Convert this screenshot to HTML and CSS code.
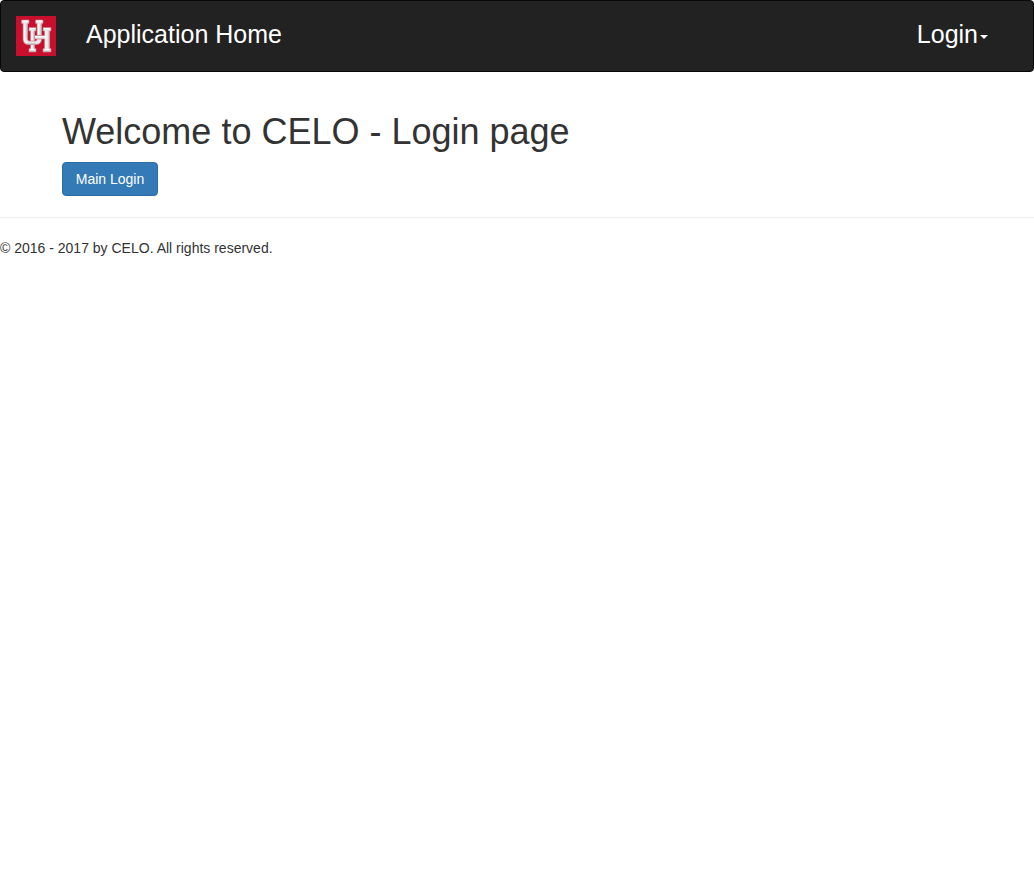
FILE: index.html
```html
<!DOCTYPE html>
<html lang="en">
<head>
  <meta charset="utf-8">
  <meta name="viewport" content="width=device-width, initial-scale=1">
  <title>CELO - Login</title>
  <link rel="stylesheet" href="styles.css">
</head>
<body>
  <nav class="navbar">
    <a class="brand" href="#" aria-label="Home">
      <svg class="logo" viewBox="0 0 40 40" aria-hidden="true">
        <rect width="40" height="40" fill="#c8102e"/>
        <g fill="#e9e9e9" stroke="#cf7482" stroke-width=".7" stroke-linejoin="round">
          <path d="M13 11.500h7v3.500h-1.500v17.500H20V36h-7v-3.500h1.500V15H13z"/>
          <path d="M5.500 4h7.500v3.500h-1.500V23q0 2 2 2H19q2 0 2-2V7.500h-1.500V4H27v3.500h-1.500V23q0 5.500-5.500 5.500h-7.500q-5.500 0-5.500-5.500V7.500h-1.500z"/>
          <path d="M27 11.500h8v3.500h-1.500v17.500H35V36h-8v-3.500h1.500V23H18.500v-3.500h10V15H27z"/>
        </g>
        <path fill="none" stroke="#fff" d="M6.500 5H12M20.500 5H26M8.500 8v15q0 3 3 4M22.500 8v11M14 12.500h5M15.800 15v9M28 12.500h6M29.800 15v17M19 20.500h10M15.800 29v4M14 33.500h5M28 33.500h6"/>
        <path fill="none" stroke="#b5b5b5" d="M11 8v15M25 8v11M18 15v9M33 15v17M18 29v3M14 35.400h5M28 35.400h6M11 28h9"/>
      </svg>
    </a>
    <a class="nav-link" href="#">Application Home</a>
    <button class="nav-link login" type="button" aria-haspopup="true">Login<span class="caret"></span></button>
  </nav>
  <main class="container">
    <h1 class="title">Welcome to CELO - Login page</h1>
    <button class="btn" type="button">Main Login</button>
  </main>
  <hr class="divider">
  <footer class="footer">© 2016 - 2017 by CELO. All rights reserved.</footer>
</body>
</html>
```

FILE: styles.css
```css
* {
  box-sizing: border-box;
}

body {
  margin: 0;
  background: #fff;
  color: #333;
  font: 14px/20px "Liberation Sans", Arial, sans-serif;
}

.navbar {
  display: flex;
  align-items: flex-start;
  min-height: 72px;
  margin-bottom: 20px;
  padding: 0 30px 0 0;
  background: #222;
  border: 1px solid #080808;
  border-radius: 4px;
}

.brand {
  padding: 15px;
}

.logo {
  display: block;
  width: 40px;
  height: 40px;
}

.nav-link {
  padding: 23px 15px;
  border: 0;
  background: none;
  color: #fff;
  font: 25px/20px "Liberation Sans", Arial, sans-serif;
  text-decoration: none;
  white-space: nowrap;
}

.login {
  display: flex;
  align-items: center;
  gap: 2px;
  margin-left: auto;
  cursor: pointer;
}

.caret {
  margin-top: 5px;
  border-top: 4px solid #fff;
  border-right: 4px solid transparent;
  border-left: 4px solid transparent;
}

.container {
  max-width: 970px;
  margin: 0 auto;
  padding: 0 30px;
}

.title {
  margin: 0 0 10px;
  padding-top: 20px;
  font-size: 36px;
  font-weight: 400;
  line-height: 40px;
}

.btn {
  display: block;
  min-width: 96px;
  padding: 6px 12px;
  border: 1px solid #2e6da4;
  border-radius: 4px;
  background: #337ab7;
  color: #fff;
  font: 14px/20px "Liberation Sans", Arial, sans-serif;
  cursor: pointer;
}

.divider {
  margin: 21px 0 20px;
  border: 0;
  border-top: 1px solid #eee;
}

.footer {
  font-size: 14px;
}
```
